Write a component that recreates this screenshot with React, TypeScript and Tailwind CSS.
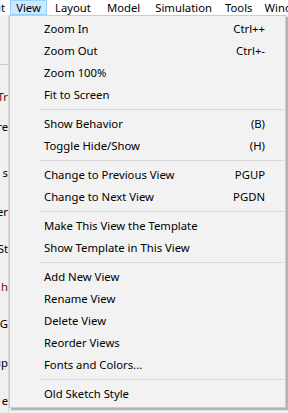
import React from 'react';

type Item = { label: string; shortcut?: string } | 'sep';

const items: Item[] = [
  { label: 'Zoom In', shortcut: 'Ctrl++' },
  { label: 'Zoom Out', shortcut: 'Ctrl+-' },
  { label: 'Zoom 100%' },
  { label: 'Fit to Screen' },
  'sep',
  { label: 'Show Behavior', shortcut: '(B)' },
  { label: 'Toggle Hide/Show', shortcut: '(H)' },
  'sep',
  { label: 'Change to Previous View', shortcut: 'PGUP' },
  { label: 'Change to Next View', shortcut: 'PGDN' },
  'sep',
  { label: 'Make This View the Template' },
  { label: 'Show Template in This View' },
  'sep',
  { label: 'Add New View' },
  { label: 'Rename View' },
  { label: 'Delete View' },
  { label: 'Reorder Views' },
  { label: 'Fonts and Colors...' },
  'sep',
  { label: 'Old Sketch Style' },
];

// bits of the window behind the menu, only their right edge shows
const behind = [
  { text: 'Tr', top: 'mt-[25px]', color: 'text-[#6b0f1a]' },
  { text: 're', top: 'mt-[16px]', color: 'text-black' },
  { text: 's', top: 'mt-[32px]', color: 'text-black' },
  { text: 'er', top: 'mt-[25px]', color: 'text-black' },
  { text: 'St', top: 'mt-[23px]', color: 'text-black' },
  { text: 'h', top: 'mt-[24px]', color: 'text-[#6b0f1a]' },
  { text: 'G', top: 'mt-[23px]', color: 'text-black' },
  { text: 'up', top: 'mt-[25px]', color: 'text-black' },
  { text: 'e', top: 'mt-[24px]', color: 'text-black' },
];

export default function App() {
  return (
    <div className="relative w-[288px] h-[413px] overflow-hidden bg-[#f0f0f0] text-[11.3px] text-black font-['Noto_Sans',sans-serif]">
      {/* menu bar */}
      <div className="flex h-[15px] items-center bg-white whitespace-nowrap leading-[15px]">
        <span className="w-[10px] shrink-0 flex justify-end overflow-hidden pr-[5px]">Edit</span>
        <span className="w-[37px] h-[15px] shrink-0 flex items-center justify-center bg-[#cce8ff] border border-[#99d1ff]">View</span>
        <span className="shrink-0 px-[8px]">Layout</span>
        <span className="shrink-0 px-[8px]">Model</span>
        <span className="shrink-0 px-[7px]">Simulation</span>
        <span className="shrink-0 px-[6px]">Tools</span>
        <span className="shrink-0 px-[6px]">Window</span>
      </div>

      {/* content behind */}
      <div className="flex">
        <div className="w-[9px] h-[398px] shrink-0 flex flex-col border-r border-[#d9d9d9] overflow-hidden">
          <div className="h-[50px] border-b border-[#c8c8c8] shrink-0" />
          {behind.map((b, i) => (
            <div key={i} className={`${b.top} ${b.color} h-[14px] leading-[14px] flex justify-end whitespace-nowrap shrink-0`}>
              {b.text}
            </div>
          ))}
        </div>
        <div className="flex-1" />
      </div>

      {/* dropdown */}
      <div className="absolute left-[9px] top-[15px] w-[277px] bg-[#f2f2f2] border border-[#cccccc] py-[2px] shadow-[2px_2px_1px_rgba(0,0,0,0.25)]">
        {items.map((it, i) =>
          it === 'sep' ? (
            <div key={i} className="h-[7px] flex items-center pl-[30px] pr-[1px]">
              <div className="h-px w-full bg-[#d7d7d7]" />
            </div>
          ) : (
            <div key={i} className="h-[22px] flex items-center justify-between pl-[34px] pr-[20px] whitespace-nowrap">
              <span>{it.label}</span>
              {it.shortcut && <span>{it.shortcut}</span>}
            </div>
          )
        )}
      </div>
    </div>
  );
}
